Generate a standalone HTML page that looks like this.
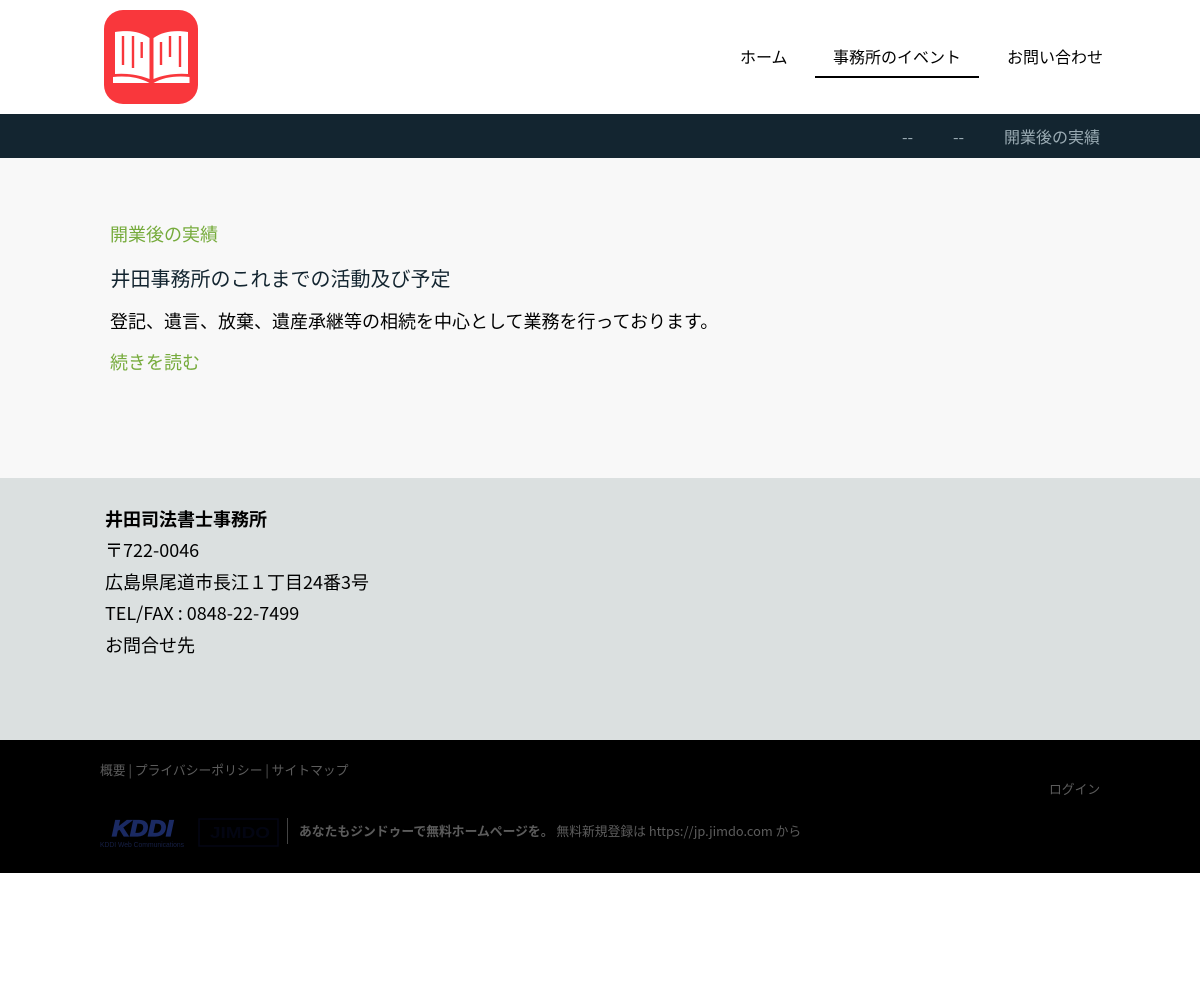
<!DOCTYPE html>
<html lang="ja"><head><meta charset="utf-8"><title>開業後の実績</title>
<style>
html,body{margin:0;padding:0;background:#fff}
body{width:1200px;height:1000px;position:relative;overflow:hidden;font-family:"Liberation Sans","Noto Sans CJK JP",sans-serif}
.t{position:absolute;white-space:nowrap;line-height:1.5;font-family:"Noto Sans CJK JP","Liberation Sans",sans-serif}
.b{position:absolute;left:0;width:1200px}
a{color:inherit;text-decoration:none}
</style></head><body>
<svg style="position:absolute;left:104px;top:10px" width="94" height="94" viewBox="0 0 94 94">
<rect width="94" height="94" rx="19" fill="#f9373c"/>
<path d="M11 22C23 20 36 21 45.500 28V69C36 65 23 63 11 64Z" fill="#fff"/>
<path d="M84 22C72 20 59 21 49.500 28V69C59 65 72 63 84 64Z" fill="#fff"/>
<path d="M9 67C21 65.500 35 67 45.500 73H9Z M85.500 67C73 65.500 59 67 49.500 73H85.500Z" fill="#fff"/>
<path d="M19 26V55M29 26V58M37.700 32V48M57 32V55M66 26V47M76 26V57" stroke="#f9373c" stroke-width="2.400" fill="none"/>
</svg>
<a class="t" style="left:740px;top:44px;font-size:16px;color:#000">ホーム</a>
<a class="t" style="left:833px;top:44px;font-size:16px;color:#000">事務所のイベント</a>
<div style="position:absolute;left:815px;top:76px;width:164px;height:2px;background:#000"></div>
<a class="t" style="left:1007px;top:44px;font-size:16px;color:#000">お問い合わせ</a>
<div class="b" style="top:114px;height:44px;background:#132530"></div>
<span class="t" style="left:902px;top:124px;font-size:16px;color:#9aabb3">--</span>
<span class="t" style="left:953px;top:124px;font-size:16px;color:#9aabb3">--</span>
<span class="t" style="left:1004px;top:124px;font-size:16px;color:#9aabb3">開業後の実績</span>
<div class="b" style="top:158px;height:320px;background:#f8f8f8"></div>
<a class="t" style="left:110px;top:221px;font-size:18px;color:#76ab3c">開業後の実績</a>
<div class="t" style="left:110.500px;top:263px;font-size:20px;color:#132530">井田事務所のこれまでの活動及び予定</div>
<div class="t" style="left:110px;top:308px;font-size:18px;color:#000">登記、遺言、放棄、遺産承継等の相続を中心として業務を行っております。</div>
<a class="t" style="left:110px;top:349px;font-size:18px;color:#76ab3c">続きを読む</a>
<div class="b" style="top:478px;height:262px;background:#dbe0e0"></div>
<div class="t" style="left:105px;top:506px;font-size:18px;color:#000;font-weight:700">井田司法書士事務所</div>
<div class="t" style="left:105px;top:537px;font-size:18px;color:#000">〒722-0046</div>
<div class="t" style="left:105px;top:569px;font-size:18px;color:#000">広島県尾道市長江１丁目24番3号</div>
<div class="t" style="left:105px;top:600px;font-size:18px;color:#000">TEL/FAX : 0848-22-7499</div>
<div class="t" style="left:105px;top:632px;font-size:18px;color:#000">お問合せ先</div>
<div class="b" style="top:740px;height:133px;background:#000"></div>
<div class="t" style="left:100px;top:760px;font-size:12.8px;color:#5c5c5c">概要 | プライバシーポリシー | サイトマップ</div>
<a class="t" style="left:1049px;top:779px;font-size:12.8px;color:#5c5c5c">ログイン</a>
<svg style="position:absolute;left:100px;top:816px" width="190" height="32" viewBox="0 0 190 32">
<text x="12" y="20" font-family="Liberation Sans" font-size="22" font-weight="700" font-style="italic" fill="#1b2a63" stroke="#1b2a63" stroke-width="1.200" textLength="61" lengthAdjust="spacingAndGlyphs">KDDI</text>
<text x="0" y="31" font-family="Liberation Sans" font-size="7" fill="#161f45" textLength="84" lengthAdjust="spacingAndGlyphs">KDDI Web Communications</text>
<rect x="99" y="3" width="79" height="27" fill="none" stroke="#040614" stroke-width="1.500"/>
<text x="110" y="22" font-family="Liberation Sans" font-size="16" font-weight="700" fill="#030512" textLength="60" lengthAdjust="spacingAndGlyphs">JIMDO</text>
<rect x="187" y="2" width="1" height="26" fill="#444"/>
</svg>
<div class="t" style="left:299px;top:821px;font-size:12.8px;color:#5c5c5c"><b>あなたもジンドゥーで無料ホームページを。</b> 無料新規登録は https://jp.jimdo.com から</div>
</body></html>
